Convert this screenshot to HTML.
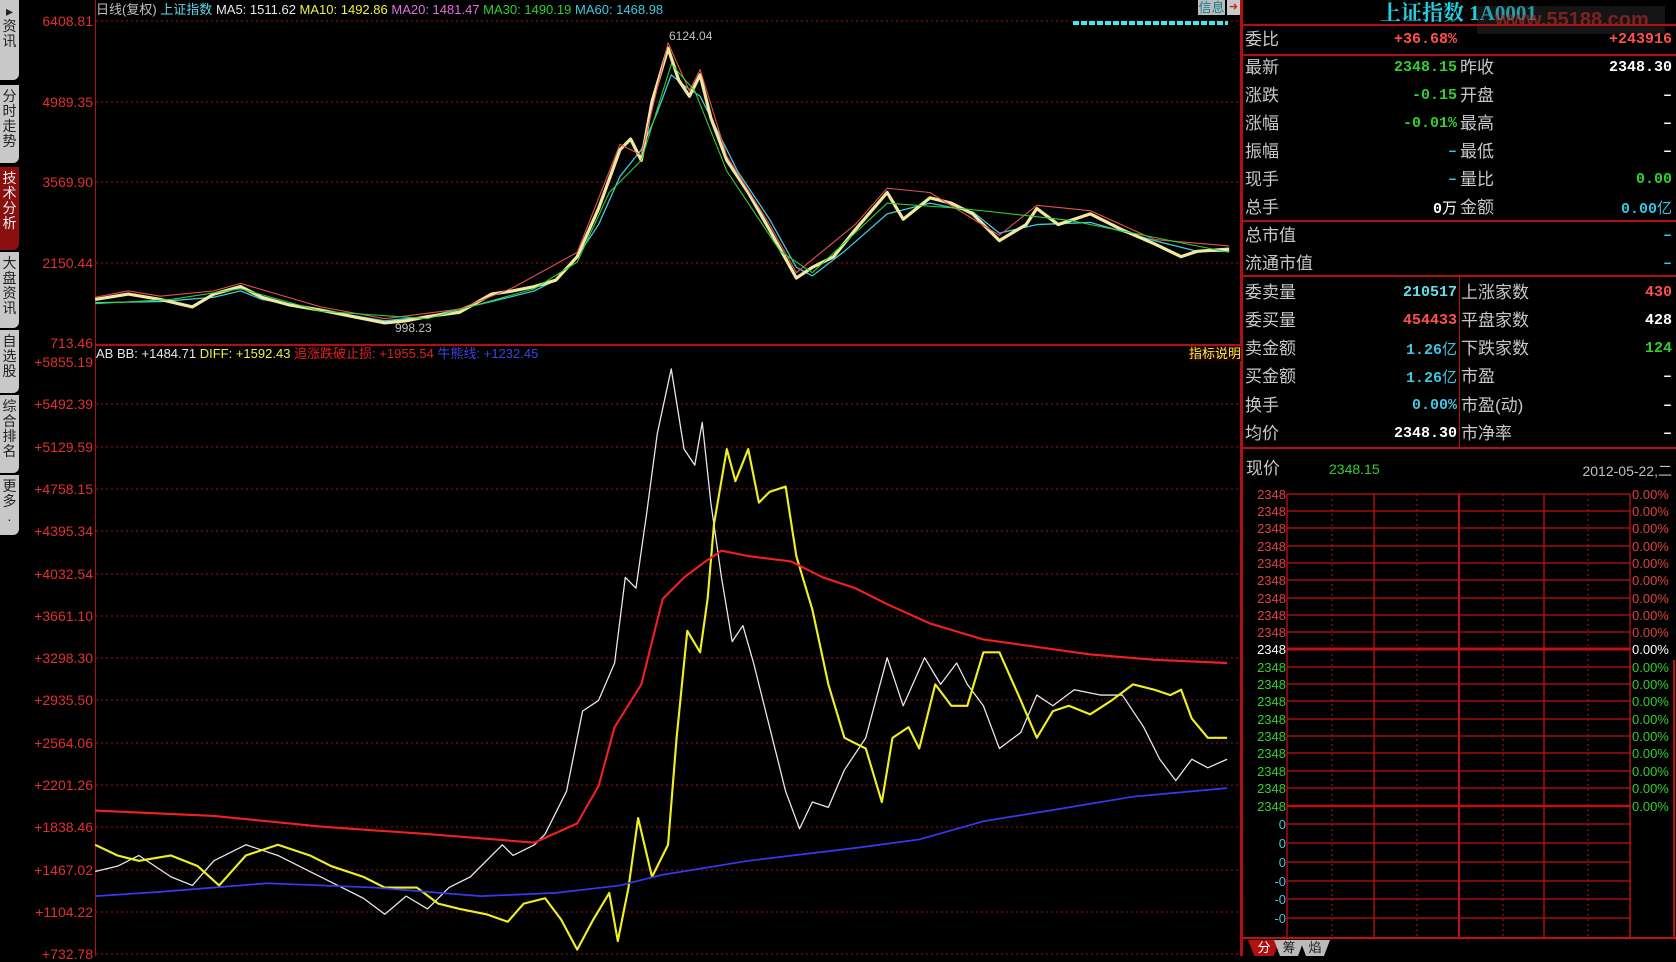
<!DOCTYPE html>
<html><head><meta charset="utf-8"><style>
*{margin:0;padding:0;box-sizing:border-box}
body{width:1676px;height:956px;background:#000;overflow:hidden;position:relative;font-family:"Liberation Sans","Noto Sans CJK SC",sans-serif;color:#c0c0c0}
.a{position:absolute;white-space:nowrap}
.yl{position:absolute;right:1583px;color:#e03030;font-size:14px;line-height:14px;text-align:right}
.tab{position:absolute;left:0;width:19px;background:#c8c8c8;color:#222;font-size:14px;line-height:15px;text-align:center;border-radius:0 0 6px 0;padding-top:4px}
.rl{position:absolute;font-size:17px;color:#c8c8c8;line-height:18px}
.rv{position:absolute;font-size:15px;font-weight:bold;font-family:"Liberation Mono","Noto Sans CJK SC",monospace;text-align:right;line-height:18px}
.hl{position:absolute;left:1243px;width:433px;height:2px;background:#b01010}
</style></head><body>
<div class="tab" style="top:0;height:80px">▸<br>资<br>讯</div>
<div class="tab" style="top:85px;height:78px">分<br>时<br>走<br>势</div>
<div class="tab" style="top:167px;height:83px;background:#8a1010;color:#eee">技<br>术<br>分<br>析</div>
<div class="tab" style="top:252px;height:76px">大<br>盘<br>资<br>讯</div>
<div class="tab" style="top:330px;height:63px">自<br>选<br>股</div>
<div class="tab" style="top:395px;height:78px">综<br>合<br>排<br>名</div>
<div class="tab" style="top:475px;height:60px">更<br>多<br>.</div>

<div class="a" style="left:95px;top:0;width:1px;height:956px;background:#b01010"></div>
<div class="a" style="left:1240px;top:0;width:3px;height:956px;background:#b01010"></div>
<div class="a" style="left:95px;top:344px;width:1145px;height:2px;background:#b01010"></div>

<div class="a" style="left:96px;top:2px;font-size:13px;line-height:15px"><span style="color:#c0c0c0">日线(复权)</span> <span style="color:#5fd8e8">上证指数</span> <span style="color:#e8e8e8">MA5: 1511.62</span> <span style="color:#f0f040">MA10: 1492.86</span> <span style="color:#e070e0">MA20: 1481.47</span> <span style="color:#30d030">MA30: 1490.19</span> <span style="color:#40c8e0">MA60: 1468.98</span></div>
<div class="a" style="left:1198px;top:0;width:27px;height:15px;background:#bcbcbc;color:#108090;font-size:13px;line-height:15px;text-align:center">信息</div>
<div class="a" style="left:1227px;top:0;width:13px;height:15px;background:#c8c8c8;color:#d02020;font-size:11px;line-height:15px;text-align:center">➜</div>

<div class="a" style="left:96px;top:346px;font-size:13px;line-height:15px"><span style="color:#e8e8e8">AB BB: +1484.71</span> <span style="color:#f0f040">DIFF: +1592.43</span> <span style="color:#e02020">追涨跌破止损: +1955.54</span> <span style="color:#4040e0">牛熊线: +1232.45</span></div>
<div class="a" style="left:1189px;top:346px;font-size:13px;line-height:15px;color:#f0f040;background:#200">指标说明</div>

<div class="yl" style="top:14px">6408.81</div>
<div class="yl" style="top:95px">4989.35</div>
<div class="yl" style="top:175px">3569.90</div>
<div class="yl" style="top:256px">2150.44</div>
<div class="yl" style="top:336px">713.46</div>
<div class="yl" style="top:355px">+5855.19</div>
<div class="yl" style="top:397px">+5492.39</div>
<div class="yl" style="top:440px">+5129.59</div>
<div class="yl" style="top:482px">+4758.15</div>
<div class="yl" style="top:524px">+4395.34</div>
<div class="yl" style="top:567px">+4032.54</div>
<div class="yl" style="top:609px">+3661.10</div>
<div class="yl" style="top:651px">+3298.30</div>
<div class="yl" style="top:693px">+2935.50</div>
<div class="yl" style="top:736px">+2564.06</div>
<div class="yl" style="top:778px">+2201.26</div>
<div class="yl" style="top:820px">+1838.46</div>
<div class="yl" style="top:863px">+1467.02</div>
<div class="yl" style="top:905px">+1104.22</div>
<div class="yl" style="top:947px">+732.78</div>

<svg class="a" style="left:0;top:0" width="1676" height="956">
<g stroke="#a01010" stroke-width="1" stroke-dasharray="2,3">
<line x1="96" y1="21" x2="1240" y2="21"/><line x1="96" y1="102" x2="1240" y2="102"/><line x1="96" y1="182" x2="1240" y2="182"/><line x1="96" y1="263" x2="1240" y2="263"/>
<line x1="96" y1="404" x2="1240" y2="404"/><line x1="96" y1="447" x2="1240" y2="447"/><line x1="96" y1="489" x2="1240" y2="489"/><line x1="96" y1="531" x2="1240" y2="531"/><line x1="96" y1="574" x2="1240" y2="574"/><line x1="96" y1="616" x2="1240" y2="616"/><line x1="96" y1="658" x2="1240" y2="658"/><line x1="96" y1="700" x2="1240" y2="700"/><line x1="96" y1="743" x2="1240" y2="743"/><line x1="96" y1="785" x2="1240" y2="785"/><line x1="96" y1="827" x2="1240" y2="827"/><line x1="96" y1="870" x2="1240" y2="870"/><line x1="96" y1="912" x2="1240" y2="912"/><line x1="96" y1="954" x2="1240" y2="954"/>
</g>
<line x1="1073" y1="23" x2="1228" y2="23" stroke="#40e8f0" stroke-width="4" stroke-dasharray="6,2"/>
</svg>

<svg class="a" style="left:0;top:0" width="1676" height="956" viewBox="0 0 1568 894" preserveAspectRatio="none">
<g fill="none" stroke-linejoin="round">
<polyline stroke="#40c8e0" stroke-width="1.2" points="89,283 150,282 200,278 225,272 245,280 300,290 360,300 400,296 460,282 500,272 520,262 540,240 560,210 580,165 600,140 615,105 628,70 640,80 655,90 670,120 690,160 720,205 745,250 760,258 790,235 830,200 870,190 910,198 935,218 970,210 1020,208 1080,225 1120,235 1150,235"/>
<polyline stroke="#f0e8a0" stroke-width="3" points="89,280 120,275 150,280 180,287 200,275 225,268 245,278 270,285 300,290 330,296 360,302 380,300 400,296 430,292 460,275 480,272 500,268 520,262 540,240 560,195 580,140 590,130 600,150 610,95 625,45 635,75 645,90 655,70 665,110 680,150 700,180 720,215 745,260 760,250 780,240 800,215 830,180 845,205 870,185 890,190 910,200 935,225 960,210 970,195 990,210 1020,200 1050,215 1080,228 1105,240 1120,235 1150,233"/>
<polyline stroke="#e85050" stroke-width="1" points="89,278 120,272 150,277 200,272 225,265 300,287 360,298 430,289 480,269 540,236 580,135 600,145 625,40 645,85 655,65 680,146 720,210 745,255 800,210 830,176 870,180 935,220 970,192 1020,197 1080,224 1150,230"/>
<polyline stroke="#30d030" stroke-width="1" points="89,284 160,280 225,270 300,291 400,298 500,270 540,245 570,180 600,150 628,60 650,85 680,160 730,235 760,255 830,190 900,195 1000,206 1150,236"/>
<polyline stroke="#e8e8e8" stroke-width="1.2" points="89,815 110,810 130,800 160,820 180,828 200,805 230,790 260,800 290,815 320,830 340,840 360,855 380,838 400,850 420,830 440,820 460,800 470,790 480,800 500,790 510,780 530,740 545,665 560,655 575,620 585,540 595,550 605,480 615,405 628,345 640,420 650,435 657,395 665,470 675,540 685,600 695,585 705,620 720,680 735,740 748,775 760,750 775,755 790,720 810,690 830,615 845,660 865,615 880,640 895,620 905,640 920,660 935,700 955,685 970,650 985,660 1005,645 1030,650 1050,650 1070,680 1085,710 1100,730 1115,710 1130,718 1148,710"/>
<polyline stroke="#f0f020" stroke-width="2" points="89,790 110,800 130,805 160,800 185,810 205,828 230,800 260,790 290,800 310,810 340,820 360,830 390,830 410,845 430,850 455,855 475,862 490,845 510,840 525,860 540,888 555,860 570,835 578,880 588,830 597,765 610,820 625,790 633,690 643,590 655,610 662,560 668,490 680,420 688,450 700,420 710,470 720,460 735,455 745,520 760,570 775,640 790,690 810,700 825,750 835,690 850,680 860,700 875,640 890,660 905,660 920,610 935,610 955,655 970,690 985,665 1000,660 1020,668 1040,655 1060,640 1080,645 1095,650 1105,645 1115,672 1130,690 1148,690"/>
<polyline stroke="#f02020" stroke-width="2" points="89,758 200,763 300,773 400,780 500,788 540,770 560,735 575,680 600,640 620,560 640,540 660,525 675,515 700,520 740,525 770,540 800,550 830,565 870,583 920,598 970,605 1020,612 1080,617 1148,620"/>
<polyline stroke="#3838f0" stroke-width="1.6" points="89,838 150,834 250,826 350,830 450,838 520,835 580,828 620,818 700,805 800,793 860,785 920,768 1000,755 1060,745 1148,737"/>
</g>
</svg>
<div class="a" style="left:669px;top:29px;font-size:12px;color:#c0c0c0">6124.04</div>
<div class="a" style="left:395px;top:321px;font-size:12px;color:#c0c0c0">998.23</div>

<div class="a" style="left:1380px;top:0;font-size:21px;font-weight:bold;color:#20d0e0;font-family:'Liberation Serif','Noto Serif CJK SC',serif;line-height:26px">上证指数 1A0001</div>
<div class="a" style="left:1477px;top:6px;width:188px;height:28px;background:rgba(60,60,60,0.35);color:rgba(170,40,40,0.7);font-size:20px;font-weight:bold;line-height:28px;padding-left:18px">www.55188.com</div>
<div class="hl" style="top:24px"></div>
<div class="hl" style="top:54px"></div>
<div class="hl" style="top:220px"></div>
<div class="hl" style="top:275px"></div>
<div class="hl" style="top:447px"></div>
<div class="a" style="left:1459px;top:276px;width:1px;height:171px;background:#b01010"></div>

<div class="rl" style="left:1245px;top:31px">委比</div>
<div class="rv" style="right:219px;top:31px;color:#ff5050">+36.68%</div>
<div class="rv" style="right:4px;top:31px;color:#ff5050">+243916</div>

<div class="rl" style="left:1245px;top:59px">最新</div><div class="rv" style="right:219px;top:59px;color:#30d030">2348.15</div><div class="rl" style="left:1460px;top:59px">昨收</div><div class="rv" style="right:4px;top:59px;color:#fff">2348.30</div>
<div class="rl" style="left:1245px;top:87px">涨跌</div><div class="rv" style="right:219px;top:87px;color:#30d030">-0.15</div><div class="rl" style="left:1460px;top:87px">开盘</div><div class="rv" style="right:4px;top:87px;color:#fff">–</div>
<div class="rl" style="left:1245px;top:115px">涨幅</div><div class="rv" style="right:219px;top:115px;color:#30d030">-0.01%</div><div class="rl" style="left:1460px;top:115px">最高</div><div class="rv" style="right:4px;top:115px;color:#fff">–</div>
<div class="rl" style="left:1245px;top:143px">振幅</div><div class="rv" style="right:219px;top:143px;color:#30c8e0">–</div><div class="rl" style="left:1460px;top:143px">最低</div><div class="rv" style="right:4px;top:143px;color:#fff">–</div>
<div class="rl" style="left:1245px;top:171px">现手</div><div class="rv" style="right:219px;top:171px;color:#30c8e0">–</div><div class="rl" style="left:1460px;top:171px">量比</div><div class="rv" style="right:4px;top:171px;color:#30d030">0.00</div>
<div class="rl" style="left:1245px;top:199px">总手</div><div class="rv" style="right:219px;top:199px;color:#fff">0<span style="font-weight:normal;font-family:'Noto Sans CJK SC'">万</span></div><div class="rl" style="left:1460px;top:199px">金额</div><div class="rv" style="right:4px;top:199px;color:#30c8e0">0.00<span style="font-weight:normal;font-family:'Noto Sans CJK SC'">亿</span></div>
<div class="rl" style="left:1245px;top:227px">总市值</div><div class="rv" style="right:4px;top:227px;color:#30c8e0">–</div>
<div class="rl" style="left:1245px;top:255px">流通市值</div><div class="rv" style="right:4px;top:255px;color:#30c8e0">–</div>

<div class="rl" style="left:1245px;top:284px">委卖量</div><div class="rv" style="right:219px;top:284px;color:#60e0e8">210517</div><div class="rl" style="left:1461px;top:284px">上涨家数</div><div class="rv" style="right:4px;top:284px;color:#ff5050">430</div>
<div class="rl" style="left:1245px;top:312px">委买量</div><div class="rv" style="right:219px;top:312px;color:#ff5050">454433</div><div class="rl" style="left:1461px;top:312px">平盘家数</div><div class="rv" style="right:4px;top:312px;color:#fff">428</div>
<div class="rl" style="left:1245px;top:340px">卖金额</div><div class="rv" style="right:219px;top:340px;color:#40c8e0">1.26<span style="font-weight:normal;font-family:'Noto Sans CJK SC'">亿</span></div><div class="rl" style="left:1461px;top:340px">下跌家数</div><div class="rv" style="right:4px;top:340px;color:#30d030">124</div>
<div class="rl" style="left:1245px;top:368px">买金额</div><div class="rv" style="right:219px;top:368px;color:#40c8e0">1.26<span style="font-weight:normal;font-family:'Noto Sans CJK SC'">亿</span></div><div class="rl" style="left:1461px;top:368px">市盈</div><div class="rv" style="right:4px;top:368px;color:#fff">–</div>
<div class="rl" style="left:1245px;top:397px">换手</div><div class="rv" style="right:219px;top:397px;color:#40c8e0">0.00%</div><div class="rl" style="left:1461px;top:397px">市盈(动)</div><div class="rv" style="right:4px;top:397px;color:#fff">–</div>
<div class="rl" style="left:1245px;top:425px">均价</div><div class="rv" style="right:219px;top:425px;color:#fff">2348.30</div><div class="rl" style="left:1461px;top:425px">市净率</div><div class="rv" style="right:4px;top:425px;color:#fff">–</div>

<div class="rl" style="left:1246px;top:460px">现价</div>
<div class="a" style="left:1329px;top:461px;font-size:14px;color:#30d030">2348.15</div>
<div class="a" style="right:4px;top:461px;font-size:14px;color:#c0c0c0">2012-05-22,二</div>

<svg class="a" style="left:0;top:0" width="1676" height="956">
<g stroke="#c01010" stroke-width="1.3">
<rect x="1287" y="494" width="343" height="444" fill="none"/>
<line x1="1374" y1="494" x2="1374" y2="938"/><line x1="1459" y1="494" x2="1459" y2="938" stroke-width="2"/><line x1="1544" y1="494" x2="1544" y2="938"/>
</g>
<g stroke="#c01010" stroke-width="1" stroke-dasharray="2,3">
<line x1="1332" y1="494" x2="1332" y2="938"/><line x1="1417" y1="494" x2="1417" y2="938"/><line x1="1503" y1="494" x2="1503" y2="938"/><line x1="1588" y1="494" x2="1588" y2="938"/>
</g>
<line x1="1630" y1="662" x2="1630" y2="938" stroke="#c01010" stroke-width="1.3" />
<line x1="1243" y1="938" x2="1676" y2="938" stroke="#c01010" stroke-width="2"/>
<line x1="1674" y1="660" x2="1674" y2="938" stroke="#c01010" stroke-width="2"/>
</svg>
<div class="a" style="left:1248px;top:940px;width:130px;height:16px">
<div class="a" style="left:0;top:0;width:32px;height:16px;background:#b01010;color:#fff;font-size:13px;text-align:center;line-height:16px;clip-path:polygon(0 0,100% 0,80% 100%,20% 100%)">分</div>
<div class="a" style="left:26px;top:0;width:30px;height:16px;background:#bbb;color:#222;font-size:13px;text-align:center;line-height:16px;clip-path:polygon(0 0,100% 0,80% 100%,20% 100%)">筹</div>
<div class="a" style="left:52px;top:0;width:30px;height:16px;background:#bbb;color:#222;font-size:13px;text-align:center;line-height:16px;clip-path:polygon(0 0,100% 0,80% 100%,20% 100%)">焰</div>
</div>

<svg class="a" style="left:0;top:0" width="1676" height="956">
<g stroke="#c01010" stroke-width="1.2">
<line x1="1287" y1="511" x2="1630" y2="511"/><line x1="1287" y1="528" x2="1630" y2="528"/><line x1="1287" y1="546" x2="1630" y2="546"/><line x1="1287" y1="563" x2="1630" y2="563"/><line x1="1287" y1="580" x2="1630" y2="580"/><line x1="1287" y1="598" x2="1630" y2="598"/><line x1="1287" y1="615" x2="1630" y2="615"/><line x1="1287" y1="632" x2="1630" y2="632"/>
<line x1="1287" y1="649" x2="1630" y2="649" stroke-width="3"/>
<line x1="1287" y1="667" x2="1630" y2="667"/><line x1="1287" y1="684" x2="1630" y2="684"/><line x1="1287" y1="701" x2="1630" y2="701"/><line x1="1287" y1="719" x2="1630" y2="719"/><line x1="1287" y1="736" x2="1630" y2="736"/><line x1="1287" y1="753" x2="1630" y2="753"/><line x1="1287" y1="771" x2="1630" y2="771"/><line x1="1287" y1="788" x2="1630" y2="788"/>
<line x1="1287" y1="806" x2="1630" y2="806" stroke-width="2.5"/>
<line x1="1287" y1="824" x2="1630" y2="824"/><line x1="1287" y1="843" x2="1630" y2="843"/><line x1="1287" y1="862" x2="1630" y2="862"/><line x1="1287" y1="881" x2="1630" y2="881"/><line x1="1287" y1="899" x2="1630" y2="899"/><line x1="1287" y1="918" x2="1630" y2="918"/>
</g>
<g font-family="Liberation Sans" font-size="13" text-anchor="end">
<g fill="#e04040"><text x="1286" y="499">2348</text><text x="1286" y="516">2348</text><text x="1286" y="533">2348</text><text x="1286" y="551">2348</text><text x="1286" y="568">2348</text><text x="1286" y="585">2348</text><text x="1286" y="603">2348</text><text x="1286" y="620">2348</text><text x="1286" y="637">2348</text></g>
<text x="1286" y="654" fill="#fff">2348</text>
<g fill="#30d030"><text x="1286" y="672">2348</text><text x="1286" y="689">2348</text><text x="1286" y="706">2348</text><text x="1286" y="724">2348</text><text x="1286" y="741">2348</text><text x="1286" y="758">2348</text><text x="1286" y="776">2348</text><text x="1286" y="793">2348</text><text x="1286" y="811">2348</text></g>
<g fill="#40c8e0"><text x="1286" y="829">0</text><text x="1286" y="848">0</text><text x="1286" y="867">0</text><text x="1286" y="886">-0</text><text x="1286" y="904">-0</text><text x="1286" y="923">-0</text></g>
</g>
<g font-family="Liberation Sans" font-size="13" text-anchor="start">
<g fill="#e04040"><text x="1632" y="499">0.00%</text><text x="1632" y="516">0.00%</text><text x="1632" y="533">0.00%</text><text x="1632" y="551">0.00%</text><text x="1632" y="568">0.00%</text><text x="1632" y="585">0.00%</text><text x="1632" y="603">0.00%</text><text x="1632" y="620">0.00%</text><text x="1632" y="637">0.00%</text></g>
<text x="1632" y="654" fill="#fff">0.00%</text>
<g fill="#30d030"><text x="1632" y="672">0.00%</text><text x="1632" y="689">0.00%</text><text x="1632" y="706">0.00%</text><text x="1632" y="724">0.00%</text><text x="1632" y="741">0.00%</text><text x="1632" y="758">0.00%</text><text x="1632" y="776">0.00%</text><text x="1632" y="793">0.00%</text><text x="1632" y="811">0.00%</text></g>
</g>
</svg>
</body></html>
